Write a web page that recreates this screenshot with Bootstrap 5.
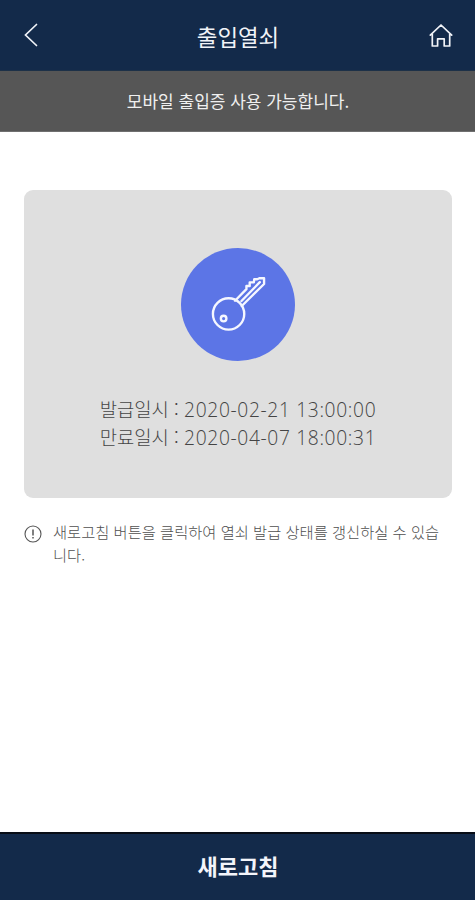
<!DOCTYPE html>
<html lang="ko">
<head>
<meta charset="utf-8">
<meta name="viewport" content="width=device-width, initial-scale=1">
<title>출입열쇠</title>
<link href="https://cdn.jsdelivr.net/npm/bootstrap@5.3.0/dist/css/bootstrap.min.css" rel="stylesheet">
<style>
  body { font-family: "Noto Sans CJK KR", sans-serif; color: #555; }
  .app-bar { height: 71px; padding: 0 22px 0 21px; background: #132a4a; border-bottom: 1px solid #1d3148; color: #f1f3f8; }
  .app-bar svg { margin-top: 2px; }
  .app-title { font-size: 22.4px; line-height: 32px; font-weight: 400; padding: 1px 0 0 2px; }
  .status-bar { height: 61px; padding-left: 1px; background: #565656; border-bottom: 1px solid #6f6f6f; color: #f0f0f0; font-size: 17px; }
  .key-panel { margin: 58px 23px 0 24px; height: 308px; padding-top: 58px; background: #dfdfdf; border-radius: 9px; }
  .key-disc { width: 114px; height: 113px; background: #5c75e6; }
  .dates { margin-top: 34px; font-size: 18.8px; line-height: 28px; font-weight: 300; color: #444; white-space: nowrap; }
  .stamp { font-family: "Open Sans", "Noto Sans", sans-serif; font-size: 19.2px; line-height: 1; letter-spacing: .65px; }
  .hint { margin: 22px 20px 0 24px; gap: 11px; font-size: 15.3px; line-height: 23px; font-weight: 300; color: #505050; word-break: break-all; }
  .hint svg { margin-top: 5px; }
  .refresh { height: 68px; background: #132a4a; border: 0; border-top: 2px solid #080d16; border-radius: 0; color: #f4f5fa; font-size: 22px; font-weight: 700; }
  .refresh span { display: block; padding: 0 0 4px 1px; }
</style>
<script src="https://cdn.jsdelivr.net/npm/bootstrap@5.3.0/dist/js/bootstrap.bundle.min.js"></script>
</head>
<body>
<div class="d-flex flex-column vh-100 overflow-hidden bg-white">
  <header class="app-bar d-flex align-items-center justify-content-between flex-shrink-0">
    <svg width="26" height="28" viewBox="0 0 26 28" fill="none" stroke="currentColor" stroke-width="1.7" stroke-linecap="round" aria-hidden="true"><path d="M15.5 2.5 4.500 13 15.500 23.500"/></svg>
    <h1 class="app-title m-0">출입열쇠</h1>
    <svg width="26" height="28" viewBox="0 0 26 28" fill="none" stroke="currentColor" stroke-width="1.7" stroke-linejoin="round" stroke-linecap="round" aria-hidden="true"><path d="M3.300 13.200 14 3 24.700 13.200M5.300 12v12h5.300v-7.200h6.600V24h5.500V12"/></svg>
  </header>
  <div class="status-bar d-flex align-items-center justify-content-center flex-shrink-0">모바일 출입증 사용 가능합니다.</div>
  <main class="flex-grow-1">
    <section class="key-panel d-flex flex-column align-items-center">
      <div class="key-disc rounded-circle">
        <svg class="d-block" width="114" height="113" viewBox="0 0 114 114" fill="none" stroke="#f5f7ff" stroke-width="2.400" stroke-linejoin="round" stroke-linecap="round" aria-hidden="true">
          <path d="M54 53.200 65.500 41.500v-3.200h3.300v-3.600H73l.4-3.200h3L78.500 30.500h4.800v5.800L60.800 58.500"/>
          <path d="M60.500 53.500 79 34.500"/>
          <circle cx="47.500" cy="66.500" r="15.800"/>
          <circle cx="42.500" cy="71.200" r="2.800"/>
        </svg>
      </div>
      <div class="dates">
        <div>발급일시 : <span class="stamp">2020-02-21 13:00:00</span></div>
        <div>만료일시 : <span class="stamp">2020-04-07 18:00:31</span></div>
      </div>
    </section>
    <div class="hint d-flex align-items-start">
      <svg class="flex-shrink-0" width="18" height="18" viewBox="0 0 18 18" fill="none" stroke="#555" aria-hidden="true"><circle cx="9" cy="9" r="8" stroke-width="1.100"/><path d="M9 4.500v6M9 12v1.500" stroke-width="1.500"/></svg>
      <span>새로고침 버튼을 클릭하여 열쇠 발급 상태를 갱신하실 수 있습<br>니다.</span>
    </div>
  </main>
  <button type="button" class="refresh btn w-100 p-0 flex-shrink-0"><span>새로고침</span></button>
</div>
</body>
</html>
